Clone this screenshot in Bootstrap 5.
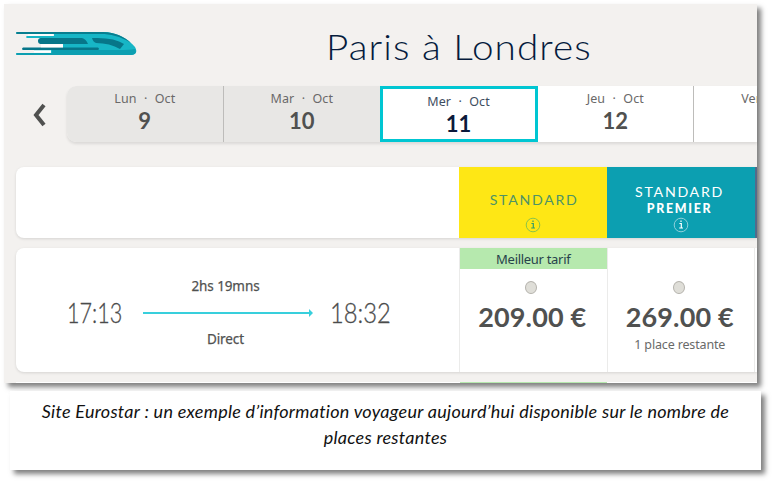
<!DOCTYPE html>
<html lang="fr">
<head>
<meta charset="utf-8">
<meta name="viewport" content="width=device-width, initial-scale=1">
<title>Paris à Londres</title>
<link href="https://cdn.jsdelivr.net/npm/bootstrap@5.3.0/dist/css/bootstrap.min.css" rel="stylesheet">
<style>
body{width:774px;height:483px;background:#fff;font-family:Lato,sans-serif;color:#505150;overflow:hidden;line-height:1}
.shot{width:753px;height:379px;margin:4px 0 0 4px;background:#f3f1ef;box-shadow:4px 4px 5px rgba(0,0,0,.5)}
.top-bar{height:82px}
.train{width:121px;height:24px;margin:28px 0 0 12px}
.title{font-size:35px;font-weight:300;color:#051b3d;margin:21px 0 0 189px;letter-spacing:.95px;white-space:nowrap;transform:scaleX(1.105);transform-origin:left}
.days{height:56px}
.prev{width:62.5px;padding-left:27px}
.day-strip{border-radius:9px 0 0 9px;box-shadow:0 2px 3px rgba(0,0,0,.1)}
.day{width:156.5px;background:#fff;border-left:1px solid #bdbcba;padding-top:4px}
.day.past{background:#e8e7e5}
.day.first{width:156.5px;border-left:0;border-radius:9px 0 0 9px}
.day.chosen{width:158px;border:3px solid #00c6d2;padding-top:4px;color:#0b1a3c}
.day.after{width:155.5px;border-left:0}
.day .lbl{font:12.5px/17px "Noto Sans",sans-serif;word-spacing:4px;letter-spacing:.1px;color:#6a6969}
.day.chosen .lbl{color:#3e4d60}
.day .num{font-size:22px;font-weight:700;line-height:28px}
.sheet{margin-left:12px;background:#fff;border-radius:8px 0 0 8px;box-shadow:0 1px 3px rgba(0,0,0,.12)}
.heads{margin-top:25px;height:71px}
.fare-head{width:148px;letter-spacing:1.7px;font-size:14.2px}
.fare-head.y{background:#fee715;color:#4e9366;padding-top:26px;padding-left:2px}
.fare-head.t{background:#0c9fb1;color:#fff;padding-top:18px;padding-right:3px}
.fare-head.t svg{margin-left:2px}
.fare-head.v{width:2px;background:#536b8b}
.info-y{margin:9px 2px 0 0}
.trip{width:443.5px}
.heavy{font-size:12.4px;font-weight:900;line-height:14px;letter-spacing:1.7px;margin-top:3px}
.times{margin-top:10px;height:124px}
.times .trip{width:443px;padding-left:51px;padding-top:5px}
.clock{font-size:27px;font-weight:300;white-space:nowrap;width:68px;color:#4a4b4b;transform:scaleX(.8);transform-origin:left;-webkit-text-stroke:.3px #4a4b4b}
.clock.end{transform:scaleX(.88);margin-left:16px}
.leg{width:171px;margin-left:8px;font:13.5px/18px "Noto Sans",sans-serif;letter-spacing:-.1px;-webkit-text-stroke:.25px #555}
.leg svg{margin:14px 0 13px}
.leg div{padding-right:6px}
.fare{width:147.5px;border-left:1px solid #ebebea}
.best{height:21px;background:#b6e9ae;color:#27434b;font:13px/22px "Noto Sans",sans-serif;letter-spacing:-.3px}
.dot{width:12px;height:13px;margin:12px auto 0 65px;border:1.5px solid #b5b3ad;border-radius:50%;background:#dfded8}
.price{font-size:27px;font-weight:700;line-height:30px;letter-spacing:.15px;white-space:nowrap;margin-top:8px;padding-right:2px}
.left-over{font:12.5px/16px "Noto Sans",sans-serif;color:#696a69;letter-spacing:-.15px;margin-top:5px;padding-right:2px}
.nextrow{margin:10px 0 0 12px;height:1px;background:#fff}
.nextrow span{width:147px;margin-left:443.5px;background:#b6e9ae}
.legend{width:751px;height:79px;margin:8px 0 0 10px;padding-top:7px;background:#fff;box-shadow:4px 4px 5px rgba(0,0,0,.5);font:italic 18px/26px Lato,sans-serif;color:#111;letter-spacing:.27px;white-space:nowrap}
</style>
</head>
<body>
<main class="shot d-flex flex-column">
  <header class="top-bar d-flex align-items-start flex-shrink-0">
    <svg class="train flex-shrink-0" viewBox="0 0 121 24">
      <path d="M1 0H87C101 0 112 7 119 15Q123 22 115 23H1Q-1 22 1 21H35V19H18V16H47V12H24V6H11Q9 5 11 4H38V2H1Q-1 1 1 0Z" fill="#17b6c6"/>
      <path d="M1 0H87C99 0 109 5 115 11C104 4 94 2 85 2H1Q-1 1 1 0Z" fill="#087e8f"/>
      <path d="M36 21H1Q-1 22 1 23H115Q122 22 119 17Q113 18 103 18H36Z" fill="#0c9fb1"/>
      <path d="M25 6H66Q70 7 72 12H25A3 3 0 0 1 25 6ZM76 6Q98 5 108 12L104 17Q94 11 80 11Q77 10 76 6ZM7 15.5H82Q84 17 82 18H7Q5 17 7 15.5Z" fill="#077689"/>
      <path d="M25 12.2H47V15.2H25ZM18 18.3H35V20.4H18ZM12 2.2H37V3.8H12Z" fill="#fff"/>
    </svg>
    <h1 class="title">Paris à Londres</h1>
  </header>
  <nav class="days d-flex flex-shrink-0">
    <div class="prev d-flex align-items-center flex-shrink-0"><svg width="15" height="26" viewBox="0 0 15 26"><path d="M13 4L5 14L13 24" fill="none" stroke="#505150" stroke-width="4"/></svg></div>
    <div class="day-strip d-flex flex-grow-1 overflow-hidden text-center">
      <div class="day past first flex-shrink-0"><div class="lbl">Lun · Oct</div><div class="num">9</div></div>
      <div class="day past flex-shrink-0"><div class="lbl">Mar · Oct</div><div class="num">10</div></div>
      <div class="day chosen flex-shrink-0"><div class="lbl">Mer · Oct</div><div class="num">11</div></div>
      <div class="day after flex-shrink-0"><div class="lbl">Jeu · Oct</div><div class="num">12</div></div>
      <div class="day flex-shrink-0"><div class="lbl">Ven · Oct</div></div>
    </div>
  </nav>
  <section class="sheet heads d-flex flex-shrink-0 text-center">
    <div class="trip"></div>
    <div class="fare-head y"><div>STANDARD</div><svg class="info-y" width="16" height="18" viewBox="0 0 16 18"><circle cx="8" cy="9" r="6.8" fill="none" stroke="#8bc34a"/><path d="M6.4 7.5H8.3V12M6.2 12H10M8 4.5V6" fill="none" stroke="#359d68" stroke-width="1.2"/></svg></div>
    <div class="fare-head t"><div>STANDARD</div><div class="heavy">PREMIER</div><svg width="16" height="18" viewBox="0 0 16 18"><circle cx="8" cy="9" r="6.8" fill="none" stroke="#8fd0da"/><path d="M6.4 7.5H8.3V12M6.2 12H10M8 4.5V6" fill="none" stroke="#fff" stroke-width="1.2"/></svg></div>
    <div class="fare-head v"></div>
  </section>
  <section class="sheet times d-flex flex-shrink-0 text-center">
    <div class="trip d-flex align-items-center">
      <div class="clock">17:13</div>
      <div class="leg"><div>2hs 19mns</div><svg class="d-block" width="171" height="8" viewBox="0 0 171 8"><path d="M0 4H167" stroke="#38cfdc" stroke-width="2"/><path d="M166 0L170 4L166 8Z" fill="#38cfdc"/></svg><div>Direct</div></div>
      <div class="clock end">18:32</div>
    </div>
    <div class="fare"><div class="best">Meilleur tarif</div><div class="dot"></div><div class="price">209.00 €</div></div>
    <div class="fare"><div class="best bg-transparent"></div><div class="dot"></div><div class="price">269.00 €</div><div class="left-over">1 place restante</div></div>
    <div class="fare w-auto"></div>
  </section>
  <div class="nextrow d-flex flex-shrink-0"><span></span></div>
</main>
<p class="legend position-relative text-center mb-0">Site Eurostar : un exemple d’information voyageur aujourd’hui disponible sur le nombre de<br>places restantes</p>
<script src="https://cdn.jsdelivr.net/npm/bootstrap@5.3.0/dist/js/bootstrap.bundle.min.js"></script>
</body>
</html>
